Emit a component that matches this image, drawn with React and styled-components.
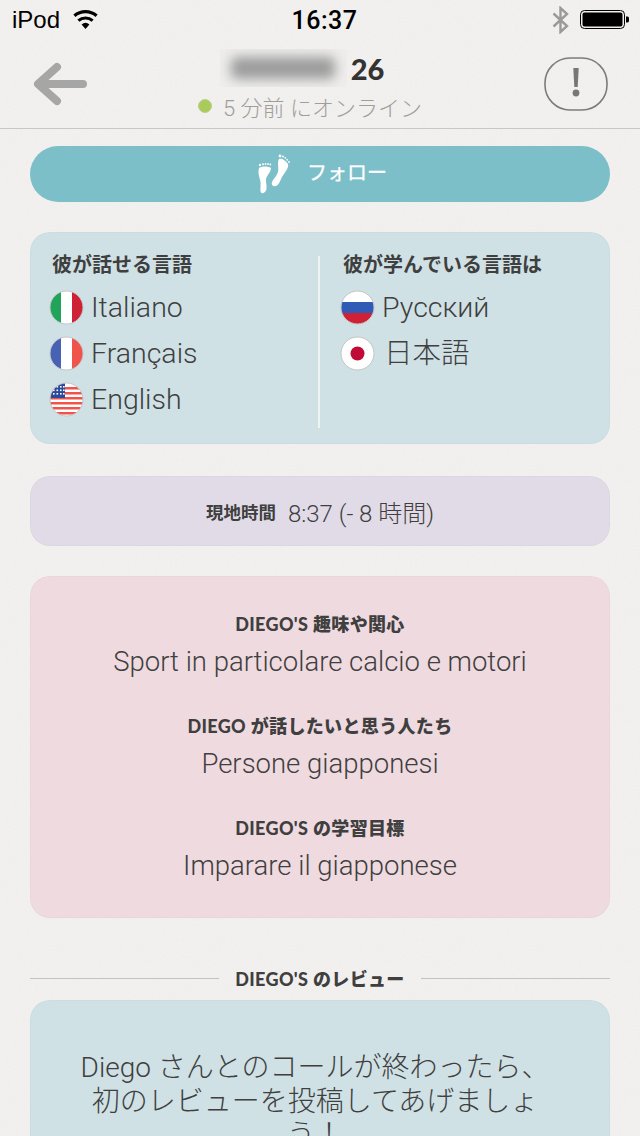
import styled, { createGlobalStyle } from "styled-components";

const sans = `"Roboto", "Noto Sans CJK JP", sans-serif`;
const bold = `"Lato", "Noto Sans CJK JP", sans-serif`;
const ios = `"Liberation Sans", "Noto Sans CJK JP", sans-serif`;

const grain = `url("data:image/svg+xml,%3Csvg xmlns='http://www.w3.org/2000/svg' width='240' height='240'%3E%3Cfilter id='n'%3E%3CfeTurbulence type='fractalNoise' baseFrequency='0.8' numOctaves='2' stitchTiles='stitch'/%3E%3CfeColorMatrix values='0 0 0 0 0.5 0 0 0 0 0.5 0 0 0 0 0.5 0 0 0 0.09 0'/%3E%3C/filter%3E%3Crect width='240' height='240' filter='url(%23n)'/%3E%3C/svg%3E")`;

const GlobalStyle = createGlobalStyle`
    html, body {
        margin: 0;
        padding: 0;
        background: #f3f1ef;
    }
`;

const Page = styled.div`
    width: 640px;
    height: 1136px;
    overflow: hidden;
    background: #f4f2f0 ${grain};
    color: #3f3f3f;
`;

const StatusBar = styled.div`
    height: 40px;
    display: grid;
    grid-template-columns: 1fr auto 1fr;
    align-items: center;
    padding: 0 11px 0 12px;
    font-family: ${ios};
    font-size: 24px;
    color: #000;
`;
const StatusLeft = styled.div`
    display: flex;
    align-items: center;
    gap: 13px;
`;
const Clock = styled.div`
    font-family: "Roboto", sans-serif;
    font-weight: 500;
    font-size: 25px;
    letter-spacing: 0.5px;
    margin-left: 8px;
`;
const StatusRight = styled.div`
    display: flex;
    justify-content: flex-end;
    align-items: center;
    gap: 11px;
`;

const Header = styled.header`
    height: 88px;
    display: grid;
    grid-template-columns: 120px 1fr 120px;
    align-items: center;
    border-bottom: 1px solid #c9c7c4;
`;
const BackCell = styled.div`
    padding-left: 32px;
    display: flex;
`;
const ReportCell = styled.div`
    padding-right: 32px;
    display: flex;
    justify-content: flex-end;
`;
const TitleBlock = styled.div`
    align-self: start;
    padding-top: 9px;
    display: flex;
    flex-direction: column;
    align-items: center;
    gap: 4px;
`;
const NameRow = styled.div`
    display: flex;
    align-items: center;
    gap: 4px;
    height: 38px;
    margin-right: 36px;
`;
const BlurFrame = styled.div`
    width: 127px;
    height: 38px;
    overflow: hidden;
    background: #eeedec;
    display: flex;
    align-items: center;
    justify-content: center;
`;
const BlurBar = styled.div`
    width: 104px;
    height: 22px;
    background: #9c9c9c;
    border-radius: 6px;
    filter: blur(6px);
`;
const Age = styled.span`
    font-family: ${bold};
    font-weight: 900;
    font-size: 29px;
    color: #333;
`;
const Online = styled.div`
    display: flex;
    align-items: center;
    gap: 11px;
    font-family: ${sans};
    font-weight: 300;
    font-size: 22px;
    color: #a09e9a;
    height: 30px;
    margin-right: 20px;
`;
const Dot = styled.span`
    width: 14px;
    height: 14px;
    border-radius: 50%;
    background: #a9cb5e;
    border: 1px solid #bcd08a;
    box-sizing: border-box;
`;

const Content = styled.main`
    padding: 17px 30px 0;
    display: flex;
    flex-direction: column;
`;

const FollowButton = styled.button`
    height: 56px;
    border: 0;
    border-radius: 28px;
    background: #7cbfc9;
    color: #fff;
    display: flex;
    align-items: center;
    justify-content: center;
    gap: 16px;
    font-family: ${bold};
    font-weight: 400;
    font-size: 20px;
    padding: 0 0 0 4px;
    -webkit-text-stroke: 0.3px #fff;
`;
const FollowLabel = styled.span`
    padding-bottom: 6px;
`;

const Card = styled.section`
    margin-top: ${({ $top }) => $top}px;
    background: ${({ $tone }) => $tone};
    border-radius: 20px;
    box-shadow: inset 0 0 0 1px rgba(0, 0, 0, 0.02);
`;

const LangGrid = styled(Card)`
    height: 212px;
    display: grid;
    grid-template-columns: 290px 1fr;
    box-sizing: border-box;
    padding: 24px 0 16px;
`;
const LangColumn = styled.div`
    padding-left: ${({ $pad }) => $pad}px;
    border-right: ${({ $rule }) => ($rule ? "2px solid #eef3f4" : "0")};
`;
const LangTitle = styled.div`
    font-family: ${bold};
    font-weight: 700;
    font-size: 20px;
    line-height: 16px;
    color: #3f3f3f;
    padding-left: ${({ $indent }) => $indent}px;
    margin-bottom: 12px;
`;
const LangRow = styled.div`
    display: flex;
    align-items: center;
    gap: ${({ $gap }) => $gap || 7}px;
    height: 46px;
    font-family: ${sans};
    font-weight: 300;
    font-size: 28.5px;
    color: #3f3f3f;
`;
const LangName = styled.span`
    position: relative;
    top: ${({ $lift }) => ($lift ? -3 : 0)}px;
`;

const TimeCard = styled(Card)`
    height: 70px;
    display: flex;
    align-items: center;
    justify-content: center;
    gap: 12px;
`;
const TimeLabel = styled.span`
    font-family: ${bold};
    font-weight: 700;
    font-size: 17.5px;
`;
const TimeValue = styled.span`
    font-family: ${sans};
    font-weight: 300;
    font-size: 24px;
`;

const InterestCard = styled(Card)`
    height: 342px;
    box-sizing: border-box;
    padding: 36px 0 0;
    display: flex;
    flex-direction: column;
    gap: 34px;
    text-align: center;
`;
const InterestItem = styled.div`
    display: flex;
    flex-direction: column;
    gap: 8px;
`;
const InterestLabel = styled.div`
    font-family: ${bold};
    font-weight: 900;
    font-size: 18px;
    line-height: 24px;
    letter-spacing: 0.35px;
`;
const InterestValue = styled.div`
    font-family: ${sans};
    font-weight: 300;
    font-size: 27.5px;
    line-height: 36px;
`;

const Divider = styled.div`
    margin-top: 48px;
    height: 24px;
    display: flex;
    align-items: center;
    gap: 16px;
    font-family: ${bold};
    font-weight: 900;
    font-size: 18px;
    letter-spacing: 0.35px;
    white-space: nowrap;
    &::before,
    &::after {
        content: "";
        flex: 1;
        height: 1px;
        background: #c4c2bf;
    }
`;

const ReviewCard = styled(Card)`
    margin-top: 10px;
    padding: 51px 60px 0 50px;
    height: 300px;
    box-sizing: border-box;
    text-align: center;
    font-family: ${sans};
    font-weight: 300;
    font-size: 28px;
    line-height: 33.5px;
`;

const flagPaths = {
    it: (
        <>
            <rect x="0" width="11" height="33" fill="#1fa45a" />
            <rect x="11" width="11" height="33" fill="#fff" />
            <rect x="22" width="11" height="33" fill="#cf2136" />
        </>
    ),
    fr: (
        <>
            <rect x="0" width="11" height="33" fill="#4762b5" />
            <rect x="11" width="11" height="33" fill="#fff" />
            <rect x="22" width="11" height="33" fill="#f0524c" />
        </>
    ),
    us: (
        <>
            <rect width="33" height="33" fill="#fff" />
            {[2, 7, 12, 17, 22, 27].map((y) => (
                <rect key={y} y={y + 2} width="33" height="2.5" fill="#f0524c" />
            ))}
            <rect width="15" height="15" fill="#2c4a9a" />
            {[3, 6.5, 10].map((y) =>
                [3, 6.5, 10, 13].map((x) => (
                    <rect key={`${x}-${y}`} x={x} y={y} width="1.6" height="1.6" fill="#fff" />
                ))
            )}
        </>
    ),
    ru: (
        <>
            <rect width="33" height="11" fill="#fff" />
            <rect y="11" width="33" height="11" fill="#2f5ab5" />
            <rect y="22" width="33" height="11" fill="#cf2136" />
        </>
    ),
    jp: (
        <>
            <rect width="33" height="33" fill="#fff" />
            <circle cx="16.5" cy="16.5" r="7" fill="#c20a38" />
        </>
    ),
};

const FlagSvg = styled.svg`
    flex: none;
`;

const Flag = ({ code }) => (
    <FlagSvg width="35" height="35" viewBox="-1 -1 35 35">
        <defs>
            <clipPath id={`flag-${code}`}>
                <circle cx="16.5" cy="16.5" r="16.5" />
            </clipPath>
        </defs>
        <g clipPath={`url(#flag-${code})`}>{flagPaths[code]}</g>
        <circle cx="16.5" cy="16.5" r="16.5" fill="none" stroke="#c4c4c4" strokeWidth="1" />
    </FlagSvg>
);

const Wifi = () => (
    <svg width="25" height="20" viewBox="0 0 25 20">
        <path d="M12.5 19 8.6 14.4a6 6 0 0 1 7.8 0Z" fill="#000" />
        <path d="M5.4 10.6a11 11 0 0 1 14.2 0M1.4 5.8a17 17 0 0 1 22.2 0" fill="none" stroke="#000" strokeWidth="3.2" />
    </svg>
);

const Bluetooth = () => (
    <svg width="17" height="28" viewBox="0 0 17 28">
        <path d="M1.5 7.5 15 20 8.5 26V2L15 8 1.5 20.5" fill="none" stroke="#9a9a9a" strokeWidth="2.4" />
    </svg>
);

const Battery = () => (
    <svg width="49" height="20" viewBox="0 0 49 20">
        <rect x="0.5" y="0.5" width="44" height="18" rx="4" fill="none" stroke="#000" />
        <rect x="2.5" y="2.5" width="40" height="14" rx="2" fill="#000" />
        <path d="M46 6.5h1.5c.9 0 1.500.9 1.500 2v2c0 1.100-.6 2-1.500 2H46Z" fill="#000" />
    </svg>
);

const BackArrow = () => (
    <svg width="56" height="44" viewBox="0 0 56 44">
        <path d="M25 5 6 22l19 17M7 22h44" fill="none" stroke="#a6a6a6" strokeWidth="8" strokeLinecap="round" strokeLinejoin="round" />
    </svg>
);

const ReportIcon = () => (
    <svg width="64" height="54" viewBox="0 0 64 54">
        <rect x="1" y="1" width="62" height="52" rx="25" fill="none" stroke="#7d7c7a" strokeWidth="1.6" />
        <path d="M29.3 11h5.400l-1 19h-3.400Z" fill="#777" />
        <circle cx="32" cy="36" r="3.4" fill="#777" />
    </svg>
);

const Footprints = () => (
    <svg width="34" height="40" viewBox="0 0 34 40" fill="#fff">
        <path d="M2 14C5 12 11 12 14 14 14 18 10 21 9 25 8.5 28 10 31 9.5 35 9 38 6 40 4.5 39 2.5 37 4 33 3.5 28 3 24 .5 20 2 14Z" />
        <path d="M22 5C25 4 28 6 31 10 32 14 28 18 25 23 23 27 22 31 19 32 16 33 14 31 15 28 16 25 20 22 21 18 22 14 20 8 22 5Z" />
        <circle cx="3" cy="11" r="1.2" />
        <circle cx="6" cy="10.3" r="1" />
        <circle cx="8.5" cy="10" r="0.9" />
        <circle cx="11" cy="10" r="0.9" />
        <circle cx="13.3" cy="10.5" r="0.9" />
        <circle cx="23" cy="2" r="1.4" />
        <circle cx="26" cy="2.4" r="1" />
        <circle cx="28.3" cy="3.8" r="0.9" />
        <circle cx="30.2" cy="5.8" r="0.9" />
        <circle cx="32" cy="8" r="0.9" />
    </svg>
);

const App = () => {
    const spoken = [
        { code: "it", name: "Italiano" },
        { code: "fr", name: "Français" },
        { code: "us", name: "English" },
    ];
    const learning = [
        { code: "ru", name: "Русский" },
        { code: "jp", name: "日本語", gap: 9, lift: true },
    ];
    const interests = [
        { label: "DIEGO'S 趣味や関心", value: "Sport in particolare calcio e motori" },
        { label: "DIEGO が話したいと思う人たち", value: "Persone giapponesi" },
        { label: "DIEGO'S の学習目標", value: "Imparare il giapponese" },
    ];

    return (
        <Page>
            <GlobalStyle />
            <StatusBar>
                <StatusLeft>
                    iPod
                    <Wifi />
                </StatusLeft>
                <Clock>16:37</Clock>
                <StatusRight>
                    <Bluetooth />
                    <Battery />
                </StatusRight>
            </StatusBar>
            <Header>
                <BackCell>
                    <BackArrow />
                </BackCell>
                <TitleBlock>
                    <NameRow>
                        <BlurFrame>
                            <BlurBar />
                        </BlurFrame>
                        <Age>26</Age>
                    </NameRow>
                    <Online>
                        <Dot />5 分前 にオンライン
                    </Online>
                </TitleBlock>
                <ReportCell>
                    <ReportIcon />
                </ReportCell>
            </Header>
            <Content>
                <FollowButton>
                    <Footprints />
                    <FollowLabel>フォロー</FollowLabel>
                </FollowButton>
                <LangGrid $top={30} $tone="#cfe1e5">
                    <LangColumn $pad={19} $rule>
                        <LangTitle $indent={3}>彼が話せる言語</LangTitle>
                        {spoken.map((lang) => (
                            <LangRow key={lang.code}>
                                <Flag code={lang.code} />
                                <LangName>{lang.name}</LangName>
                            </LangRow>
                        ))}
                    </LangColumn>
                    <LangColumn $pad={20}>
                        <LangTitle $indent={3}>彼が学んでいる言語は</LangTitle>
                        {learning.map((lang) => (
                            <LangRow key={lang.code} $gap={lang.gap}>
                                <Flag code={lang.code} />
                                <LangName $lift={lang.lift}>{lang.name}</LangName>
                            </LangRow>
                        ))}
                    </LangColumn>
                </LangGrid>
                <TimeCard $top={32} $tone="#e1dbe7">
                    <TimeLabel>現地時間</TimeLabel>
                    <TimeValue>8:37 (- 8 時間)</TimeValue>
                </TimeCard>
                <InterestCard $top={30} $tone="#efdadf">
                    {interests.map((item) => (
                        <InterestItem key={item.label}>
                            <InterestLabel>{item.label}</InterestLabel>
                            <InterestValue>{item.value}</InterestValue>
                        </InterestItem>
                    ))}
                </InterestCard>
                <Divider>DIEGO'S のレビュー</Divider>
                <ReviewCard $tone="#cfe1e5">
                    Diego さんとのコールが終わったら、初のレビューを投稿してあげましょう！
                </ReviewCard>
            </Content>
        </Page>
    );
};

export default App;
